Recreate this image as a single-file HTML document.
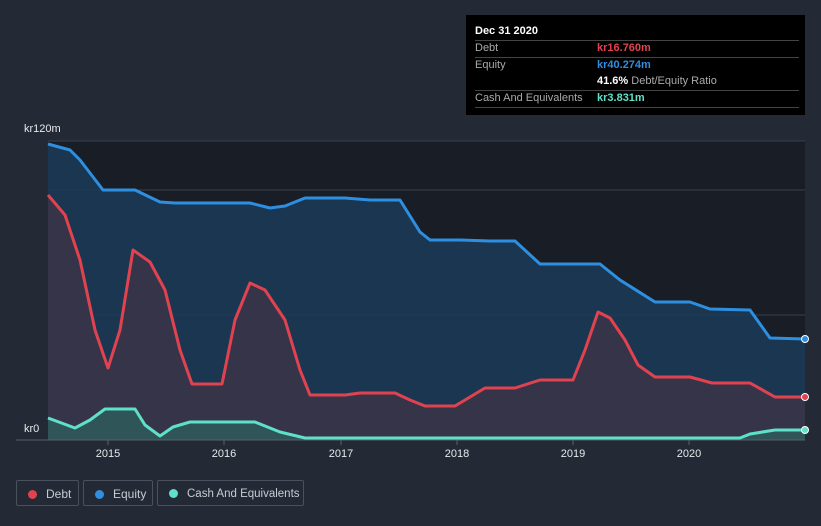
<!DOCTYPE html><html><head><style>
body{margin:0;width:821px;height:526px;background:#232a35;font-family:"Liberation Sans",sans-serif;overflow:hidden;position:relative}
.tt{position:absolute;left:466px;top:15px;width:339px;height:100px;background:#000;color:#fff;font-size:11px}
.tt .r{position:absolute;left:9px;width:324px;border-bottom:1px solid #444}
.lg{position:absolute;top:480px;height:26px;border:1px solid #4a505c;border-radius:2px;color:#c8ccd2;font-size:12px;line-height:26px;box-sizing:border-box;white-space:nowrap}
.lg i{display:inline-block;width:9px;height:9px;border-radius:50%;margin:0 9px 0 11px;vertical-align:-1px}
</style></head><body>
<svg width="821" height="526" style="position:absolute;left:0;top:0">
<rect x="48" y="141" width="757" height="299" fill="#181d26"/>
<line x1="48" y1="141" x2="805" y2="141" stroke="#3a404b"/>
<line x1="48" y1="190" x2="805" y2="190" stroke="#3a404b"/>
<line x1="48" y1="315" x2="805" y2="315" stroke="#3a404b"/>
<path d="M48,144 L70,150 80,160 103,190 135,190 160,202 175,203 250,203 270,208 285,206 305,198 345,198 370,200 400,200 420,232 430,240 460,240 490,241 515,241 540,264 600,264 620,280 655,302 690,302 710,309 750,310 770,338 805,339 L805,440 48,440Z" fill="#1b3a55" opacity="0.9"/>
<path d="M48,195 L65,215 80,260 95,330 108,368 120,330 133,250 150,262 165,290 180,350 192,384 222,384 235,320 250,283 265,290 285,320 300,370 310,395 345,395 360,393 395,393 410,400 425,406 455,406 485,388 515,388 540,380 573,380 585,350 598,312 610,318 625,340 638,365 655,377 690,377 712,383 750,383 775,397 805,397 L805,440 48,440Z" fill="#3a3448" opacity="0.9"/>
<path d="M48,418 L75,428 90,420 105,409 135,409 145,425 160,436 173,427 190,422 255,422 280,432 305,438 740,438 750,434 775,430 805,430 L805,440 48,440Z" fill="#2f5558"/>
<g fill="none" stroke-width="3" stroke-linejoin="round">
<path d="M48,144 L70,150 80,160 103,190 135,190 160,202 175,203 250,203 270,208 285,206 305,198 345,198 370,200 400,200 420,232 430,240 460,240 490,241 515,241 540,264 600,264 620,280 655,302 690,302 710,309 750,310 770,338 805,339" stroke="#2e8fe0"/>
<path d="M48,195 L65,215 80,260 95,330 108,368 120,330 133,250 150,262 165,290 180,350 192,384 222,384 235,320 250,283 265,290 285,320 300,370 310,395 345,395 360,393 395,393 410,400 425,406 455,406 485,388 515,388 540,380 573,380 585,350 598,312 610,318 625,340 638,365 655,377 690,377 712,383 750,383 775,397 805,397" stroke="#e0434f"/>
<path d="M48,418 L75,428 90,420 105,409 135,409 145,425 160,436 173,427 190,422 255,422 280,432 305,438 740,438 750,434 775,430 805,430" stroke="#5fe0c8"/>
</g>
<line x1="16" y1="440" x2="805" y2="440" stroke="#5a606b"/>
<g stroke="#5a606b"><line x1="108" y1="440" x2="108" y2="445"/><line x1="224" y1="440" x2="224" y2="445"/><line x1="341" y1="440" x2="341" y2="445"/><line x1="457" y1="440" x2="457" y2="445"/><line x1="573" y1="440" x2="573" y2="445"/><line x1="689" y1="440" x2="689" y2="445"/></g>
<circle cx="805" cy="339" r="3.5" fill="#2e8fe0" stroke="#fff" stroke-width="1"/>
<circle cx="805" cy="397" r="3.5" fill="#e0434f" stroke="#fff" stroke-width="1"/>
<circle cx="805" cy="430" r="3.5" fill="#5fe0c8" stroke="#fff" stroke-width="1"/>
<g fill="#e6e8eb" font-size="11" font-family="Liberation Sans"><text x="24" y="132">kr120m</text><text x="24" y="432">kr0</text>
<g text-anchor="middle"><text x="108" y="457">2015</text><text x="224" y="457">2016</text><text x="341" y="457">2017</text><text x="457" y="457">2018</text><text x="573" y="457">2019</text><text x="689" y="457">2020</text></g></g>
</svg>
<div class="tt">
<div style="position:absolute;left:9px;top:10px;font-weight:bold">Dec 31 2020</div>
<div class="r" style="top:11px;height:14px"></div>
<div style="position:absolute;left:9px;top:27px;color:#aaa">Debt</div><div style="position:absolute;left:131px;top:27px;color:#e0434f;font-weight:bold">kr16.760m</div>
<div class="r" style="top:28px;height:14px"></div>
<div style="position:absolute;left:9px;top:44px;color:#aaa">Equity</div><div style="position:absolute;left:131px;top:44px;color:#2e8fe0;font-weight:bold">kr40.274m</div>
<div style="position:absolute;left:131px;top:60px;color:#aaa"><b style="color:#fff">41.6%</b> Debt/Equity Ratio</div>
<div class="r" style="top:61px;height:14px"></div>
<div style="position:absolute;left:9px;top:77px;color:#aaa">Cash And Equivalents</div><div style="position:absolute;left:131px;top:77px;color:#5fe0c8;font-weight:bold">kr3.831m</div>
<div class="r" style="top:78px;height:14px"></div>
</div>
<div class="lg" style="left:16px;width:63px"><i style="background:#e0434f"></i>Debt</div>
<div class="lg" style="left:83px;width:70px"><i style="background:#2e8fe0"></i>Equity</div>
<div class="lg" style="left:157px;width:147px;font-size:11.5px"><i style="background:#5fe0c8"></i>Cash And Equivalents</div>
</body></html>
